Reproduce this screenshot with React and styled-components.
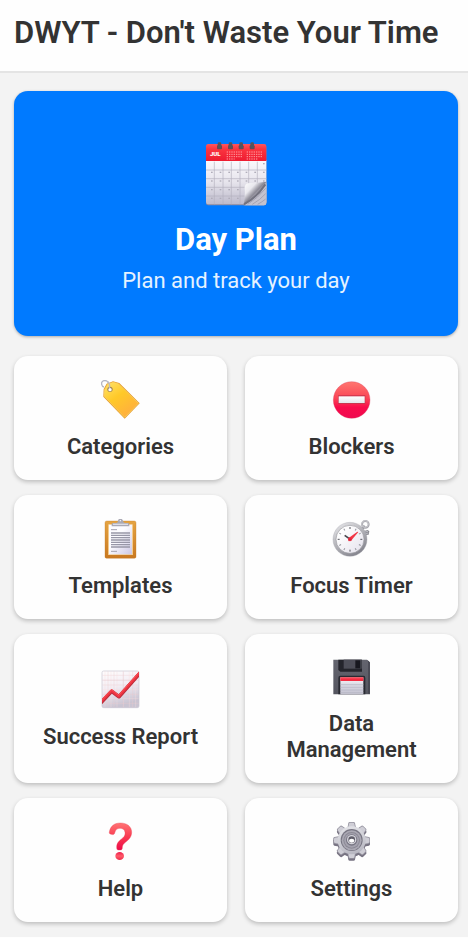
import React from 'react'
import styled, { createGlobalStyle } from 'styled-components'

const GlobalStyle = createGlobalStyle`
    * {
        box-sizing: border-box;
    }

    body {
        margin: 0;
        background-color: #fefefe;
        color: #333333;
        font-family: Roboto, "Liberation Sans", sans-serif;
    }
`

const range = (n) => Array.from({ length: n }, (_, i) => i)

const CalendarIcon = () => (
    <Icon $size={64} viewBox="44 36 192 192" aria-hidden="true">
        <defs>
            <linearGradient id="calPage" x1="0" y1="0" x2="0" y2="1">
                <stop offset="0" stopColor="#fbf9fd" />
                <stop offset="0.5" stopColor="#e6e4ec" />
                <stop offset="1" stopColor="#bdbacb" />
            </linearGradient>
            <linearGradient id="calTop" x1="0" y1="0" x2="0" y2="1">
                <stop offset="0" stopColor="#ff555c" />
                <stop offset="0.3" stopColor="#fa3540" />
                <stop offset="1" stopColor="#ee1b31" />
            </linearGradient>
            <linearGradient id="calCurl" x1="0" y1="0" x2="1" y2="1">
                <stop offset="0" stopColor="#ffffff" />
                <stop offset="0.3" stopColor="#e9e8ee" />
                <stop offset="0.48" stopColor="#8b8995" />
                <stop offset="0.6" stopColor="#b8b6c2" />
            </linearGradient>
        </defs>
        <rect x="50" y="46" width="181" height="180" rx="7" fill="#8d8a9f" />
        <path d="M50 90h181v126q0 7-7 7H57q-7 0-7-7z" fill="url(#calPage)" />
        <path d="M50 93V49q0-7 7-7h167q7 0 7 7v44z" fill="url(#calTop)" />
        <path d="M75 95v128M101 95v128M126 95v128M152 95v128M178 95v66M204 95v66M50 120h181M50 146h181M50 172h116M50 198h116" stroke="#b3b0be" strokeWidth="2" />
        {range(26).map((i) => (
            <rect key={i} x={65 + ((i + 6) % 7) * 26} y={99 + Math.floor((i + 6) / 7) * 26} width="5" height="4" fill="#b0adba" />
        ))}
        <text x="62" y="79" fill="#ffffff" fontSize="18" fontWeight="900">JUL</text>
        {range(2).map((m) => (
            <g key={m} stroke="#ff9da2" strokeWidth="3" strokeDasharray="4 3">
                <path d={`M${112 + m * 60} 66h48M${112 + m * 60} 73h48M${112 + m * 60} 80h48M${112 + m * 60} 87h${m ? 34 : 24}`} />
            </g>
        ))}
        {[90, 123, 155, 188].map((x) => (
            <g key={x}>
                <rect x={x - 7} y="46" width="15" height="12" rx="3" fill="#74434b" />
                <rect x={x - 5} y="37" width="11" height="19" rx="4" fill="#54545e" />
            </g>
        ))}
        <path d="M163 226q5-26 3-52 0-12 10-14 24-1 55-5v61q0 10-7 10z" fill="url(#calCurl)" />
        <path d="M164 224q37-15 65-65l2 2v58q0 7-7 7h-58z" fill="#c4c2ce" />
        <path d="M164 223q38-20 64-60" fill="none" stroke="#73727f" strokeWidth="6" />
        <path d="M175 223q32-20 54-48M189 223q23-13 40-32M205 223q13-7 24-16" fill="none" stroke="#9694a4" strokeWidth="2" />
    </Icon>
)

const TagIcon = () => (
    <Icon viewBox="33 30 120 120" aria-hidden="true">
        <defs>
            <linearGradient id="tagFill" x1="0" y1="0" x2="0.7" y2="1">
                <stop offset="0" stopColor="#ffe26a" />
                <stop offset="0.45" stopColor="#ffc928" />
                <stop offset="1" stopColor="#ffad40" />
            </linearGradient>
        </defs>
        <path d="M42 51c-8-2-10-14-3-18 8-4 16 1 17 9 1 9 2 15 6 17" fill="none" stroke="#b4b5c4" strokeWidth="4" />
        <path d="M50 41l19-7 19 5 61 61-45 46-64-66 1-23z" fill="#e49b2c" />
        <path d="M53 43l17-6 16 5 59 58-41 42-61-63 1-20z" fill="url(#tagFill)" stroke="#ffda65" strokeWidth="2" />
        <circle cx="60" cy="58" r="8" fill="#a28455" />
        <circle cx="60" cy="59" r="5" fill="#ffffff" />
        <path d="M52 34q9 6 6 20" fill="none" stroke="#bbbac6" strokeWidth="4" />
    </Icon>
)

const NoEntryIcon = () => (
    <Icon viewBox="30 30 120 120" aria-hidden="true">
        <defs>
            <linearGradient id="stopFill" x1="0" y1="0" x2="0" y2="1">
                <stop offset="0" stopColor="#ff7770" />
                <stop offset="0.45" stopColor="#fa4556" />
                <stop offset="0.7" stopColor="#f80b4b" />
                <stop offset="1" stopColor="#ef0a50" />
            </linearGradient>
            <linearGradient id="stopBar" x1="0" y1="0" x2="0" y2="1">
                <stop offset="0" stopColor="#ffffff" />
                <stop offset="1" stopColor="#e4e5eb" />
            </linearGradient>
        </defs>
        <circle cx="89" cy="90" r="55" fill="url(#stopFill)" stroke="#d9385c" strokeWidth="1" />
        <rect x="48" y="76" width="82" height="26" rx="1" fill="#c9354e" />
        <rect x="50" y="79" width="78" height="20" fill="url(#stopBar)" />
    </Icon>
)

const ClipboardIcon = () => (
    <Icon viewBox="33 27 120 120" aria-hidden="true">
        <defs>
            <linearGradient id="board" x1="0" y1="0" x2="0" y2="1">
                <stop offset="0" stopColor="#e5a443" />
                <stop offset="1" stopColor="#c97820" />
            </linearGradient>
            <linearGradient id="boardPaper" x1="0" y1="0" x2="1" y2="1">
                <stop offset="0.4" stopColor="#fdfcff" />
                <stop offset="1" stopColor="#ccc7e4" />
            </linearGradient>
        </defs>
        <rect x="45" y="33" width="93" height="112" rx="5" fill="url(#board)" stroke="#c27a28" strokeWidth="1" />
        <rect x="54" y="43" width="75" height="92" fill="#f3cb8c" />
        <rect x="57" y="44" width="69" height="89" fill="url(#boardPaper)" />
        <path d="M63 59h18M63 124h18" stroke="#a4a2ae" strokeWidth="3" />
        <path d="M63 69h57M63 76h57M63 83h57M63 90h57M63 97h57M63 104h57M63 111h57" stroke="#9897a7" strokeWidth="4" />
        <path d="M65 49v-6q0-4 5-4h9q5-1 5-7 1-6 7-6t8 6q1 6 6 7h8q5 0 5 4v6z" fill="#aaa9b4" />
        <path d="M69 43h45" stroke="#dddce5" strokeWidth="4" />
        <circle cx="91" cy="32" r="2" fill="#ffffff" />
    </Icon>
)

const StopwatchIcon = () => (
    <Icon viewBox="30 27 120 120" aria-hidden="true">
        <defs>
            <linearGradient id="watchRim" x1="0" y1="0" x2="0.6" y2="1">
                <stop offset="0" stopColor="#ededf0" />
                <stop offset="0.5" stopColor="#b8b8bd" />
                <stop offset="1" stopColor="#86868f" />
            </linearGradient>
            <linearGradient id="watchFace" x1="0" y1="0" x2="1" y2="1">
                <stop offset="0.2" stopColor="#ffffff" />
                <stop offset="1" stopColor="#e4e1ec" />
            </linearGradient>
        </defs>
        <path d="M114 56l12-11 5 6-11 11z" fill="#8f8f97" />
        <circle cx="130" cy="43" r="10" fill="none" stroke="#a6a6ad" strokeWidth="6" />
        <circle cx="129" cy="42" r="10" fill="none" stroke="#dadadd" strokeWidth="2" />
        <path d="M126 63l11-3 5 4-2 10-8 1z" fill="#88888f" />
        <path d="M129 66l9-2M130 71l9-2" stroke="#d7d7dc" strokeWidth="2" />
        <circle cx="84" cy="88" r="51" fill="url(#watchRim)" stroke="#a2a2a9" strokeWidth="1" />
        <circle cx="84" cy="88" r="42" fill="url(#watchFace)" stroke="#98989f" strokeWidth="2" />
        {range(12).map((i) => (
            <path key={i} d="M84 51v6" stroke={i % 3 ? '#96969e' : '#55555d'} strokeWidth="3" transform={`rotate(${i * 30} 84 88)`} />
        ))}
        <path d="M85 88L68 76" stroke="#45454c" strokeWidth="5" />
        <path d="M80 94l-1-9 27-20 3 1-20 24z" fill="#f23645" />
        <circle cx="84" cy="88" r="6" fill="#e72f43" />
        <circle cx="84" cy="88" r="2" fill="#bd1e34" />
    </Icon>
)

const ChartIcon = () => (
    <Icon viewBox="33 27 120 120" aria-hidden="true">
        <defs>
            <linearGradient id="chartPaper" x1="0" y1="0" x2="0.3" y2="1">
                <stop offset="0" stopColor="#fffdfd" />
                <stop offset="0.5" stopColor="#f2edf4" />
                <stop offset="1" stopColor="#c9c4d2" />
            </linearGradient>
            <clipPath id="chartClip">
                <rect x="36" y="30" width="111" height="110" rx="5" />
            </clipPath>
        </defs>
        <rect x="36" y="30" width="111" height="110" rx="5" fill="url(#chartPaper)" stroke="#c9c5d1" strokeWidth="2" />
        <path d="M54 31v108M72 31v108M128 31v108M37 43h109M37 72h109M37 100h109M37 127h109" stroke="#ecc8cb" strokeWidth="1" />
        <path d="M45 31v108M63 31v108M81 31v108M100 31v108M118 31v108M137 31v108M37 57h109M37 86h109M37 113h109" stroke="#f8ddde" strokeWidth="1" />
        <path d="M100 31v108M37 58h109" stroke="#dfbfc4" strokeWidth="1" />
        <g clipPath="url(#chartClip)" fill="none">
            <path d="M32 126l33-35 22 16 64-72" stroke="#b82e3d" strokeWidth="11" strokeLinejoin="round" />
            <path d="M32 123l33-34 21 17 64-72" stroke="#ee3440" strokeWidth="8" strokeLinejoin="round" />
            <path d="M32 120l33-34 21 17 64-72" stroke="#ff6065" strokeWidth="2" />
        </g>
    </Icon>
)

const FloppyIcon = () => (
    <Icon viewBox="30 28 120 120" aria-hidden="true">
        <defs>
            <linearGradient id="diskBody" x1="0" y1="0" x2="0" y2="1">
                <stop offset="0" stopColor="#64656f" />
                <stop offset="1" stopColor="#555660" />
            </linearGradient>
            <linearGradient id="diskLabel" x1="0" y1="0" x2="0" y2="1">
                <stop offset="0" stopColor="#ffffff" />
                <stop offset="0.4" stopColor="#dddbe5" />
                <stop offset="1" stopColor="#c3c2d0" />
            </linearGradient>
        </defs>
        <path d="M34 36h101l9 8v96H34z" fill="url(#diskBody)" />
        <path d="M136 37l7 7v94h-4V44z" fill="#40414b" />
        <path d="M49 36h71v36H55l-6-5z" fill="#24252c" />
        <path d="M65 36h54v27H65z" fill="#4d4e58" />
        <path d="M100 38h15v24h-15z" fill="#17181f" />
        <path d="M49 140V91q0-7 6-7h70q5 0 5 7v49z" fill="#292a32" />
        <path d="M55 89h69v51H55z" fill="url(#diskLabel)" />
        <path d="M55 89h69v11H55z" fill="#f52c42" />
        <path d="M55 91h69" stroke="#ff6771" strokeWidth="2" />
        <path d="M55 111h69M55 119h69M55 127h69M55 135h69" stroke="#b4b3c2" strokeWidth="2" />
    </Icon>
)

const QuestionIcon = () => (
    <Icon viewBox="33 24 120 120" aria-hidden="true">
        <defs>
            <linearGradient id="question" x1="0" y1="0" x2="0" y2="1">
                <stop offset="0" stopColor="#ff7474" />
                <stop offset="0.5" stopColor="#fa3c52" />
                <stop offset="1" stopColor="#ed0a4a" />
            </linearGradient>
            <linearGradient id="questionDot" x1="0" y1="0" x2="0" y2="1">
                <stop offset="0" stopColor="#ed1c4d" />
                <stop offset="0.5" stopColor="#ff5c69" />
                <stop offset="1" stopColor="#ee2d4b" />
            </linearGradient>
        </defs>
        <path d="M58 54c3-18 15-27 33-27 21 0 34 11 34 28 0 14-8 21-15 27-10 7-13 12-13 19 0 5-2 7-6 7h-6c-4 0-5-3-5-9 0-13 9-20 18-27 6-5 8-10 7-17-1-8-7-12-15-12-9 0-13 4-16 14-1 4-5 6-10 4-5-1-7-3-6-7z" fill="url(#question)" stroke="#e73b50" strokeWidth="1" />
        <ellipse cx="89" cy="126" rx="13" ry="12" fill="url(#questionDot)" />
    </Icon>
)

const gearTooth = 'M76 44l3-17q1-3 4-3h12q3 0 4 3l3 17z'

const GearIcon = () => (
    <Icon viewBox="30 24 120 120" aria-hidden="true">
        <defs>
            <linearGradient id="gearFace" gradientUnits="userSpaceOnUse" x1="70" y1="24" x2="100" y2="136">
                <stop offset="0" stopColor="#e9e9ed" />
                <stop offset="0.5" stopColor="#cdcdd4" />
                <stop offset="1" stopColor="#aeadb9" />
            </linearGradient>
        </defs>
        <g fill="#777382" transform="translate(0 6)">
            {range(8).map((i) => (
                <path key={i} d={gearTooth} transform={`rotate(${i * 45} 89 79)`} />
            ))}
            <circle cx="89" cy="79" r="43" />
        </g>
        <g fill="#9694a0">
            {range(8).map((i) => (
                <path key={i} d={gearTooth} transform={`rotate(${i * 45} 89 79)`} />
            ))}
        </g>
        <g fill="#cfced6">
            {range(8).map((i) => (
                <path key={i} d="M78 46l3-17q1-3 3-3h10q2 0 3 3l3 17z" transform={`rotate(${i * 45} 89 79)`} />
            ))}
        </g>
        <circle cx="89" cy="79" r="42" fill="url(#gearFace)" />
        <circle cx="89" cy="78" r="33" fill="#777582" />
        <circle cx="89" cy="79" r="30" fill="#aaa8b3" />
        <circle cx="89" cy="79" r="25" fill="#8b8995" />
        <circle cx="89" cy="79" r="22" fill="#a4a2ae" />
        <circle cx="89" cy="78" r="17" fill="#777582" />
        <circle cx="89" cy="77" r="14" fill="#d6d5dc" />
        <circle cx="89" cy="77" r="10" fill="#5f5d69" />
        <ellipse cx="89" cy="80" rx="8" ry="6" fill="#ffffff" />
    </Icon>
)

const menuItems = [
    { label: 'Categories', icon: TagIcon },
    { label: 'Blockers', icon: NoEntryIcon },
    { label: 'Templates', icon: ClipboardIcon },
    { label: 'Focus Timer', icon: StopwatchIcon },
    { label: 'Success Report', icon: ChartIcon },
    { label: 'Data Management', icon: FloppyIcon },
    { label: 'Help', icon: QuestionIcon },
    { label: 'Settings', icon: GearIcon },
]

export default function App() {
    return (
        <>
            <GlobalStyle />
            <Screen>
                <Header>
                    <Title>DWYT - Don't Waste Your Time</Title>
                </Header>
                <Main>
                    <DayPlanButton type="button">
                        <CalendarIcon />
                        <DayPlanTitle>Day Plan</DayPlanTitle>
                        <DayPlanText>Plan and track your day</DayPlanText>
                    </DayPlanButton>
                    <Menu>
                        {menuItems.map(({ label, icon: ItemIcon }) => (
                            <MenuButton type="button" key={label}>
                                <ItemIcon />
                                <MenuLabel>{label}</MenuLabel>
                            </MenuButton>
                        ))}
                    </Menu>
                </Main>
            </Screen>
        </>
    )
}

const Screen = styled.div`
    background-color: #f3f3f3;
`

const Header = styled.header`
    padding: 13px 14px 18px;
    background-color: #fefefe;
    border-bottom: 2px solid #e4e4e4;
`

const Title = styled.h1`
    margin: 0;
    font-size: 31px;
    line-height: 40px;
    font-weight: 600;
`

const Main = styled.main`
    display: flex;
    flex-direction: column;
    gap: 20px;
    padding: 18px 10px 15px 14px;
`

const Icon = styled.svg`
    display: block;
    flex: none;
    width: ${(props) => props.$size || 40}px;
    height: ${(props) => props.$size || 40}px;
`

const Card = styled.button`
    display: flex;
    flex-direction: column;
    align-items: center;
    border: none;
    border-radius: 14px;
    font-family: inherit;
    cursor: pointer;
`

const DayPlanButton = styled(Card)`
    padding: 51px 20px 41px;
    background-color: #007aff;
    color: #ffffff;
    box-shadow: 0 1px 3px rgba(0, 0, 0, 0.3);
`

const DayPlanTitle = styled.span`
    margin-top: 14px;
    font-size: 31px;
    line-height: 40px;
    font-weight: 700;
`

const DayPlanText = styled.span`
    margin-top: 7px;
    font-size: 22px;
    line-height: 28px;
    color: #e5f2ff;
`

const Menu = styled.div`
    display: grid;
    grid-template-columns: 1fr 1fr;
    gap: 15px 18px;
`

const MenuButton = styled(Card)`
    justify-content: center;
    min-height: 124px;
    padding: 23px 20px 20px;
    background-color: #fefefe;
    color: #333333;
    box-shadow: 0 2px 4px rgba(0, 0, 0, 0.22);
`

const MenuLabel = styled.span`
    margin-top: 14px;
    font-size: 22px;
    line-height: 26px;
    font-weight: 600;
    text-align: center;
`
